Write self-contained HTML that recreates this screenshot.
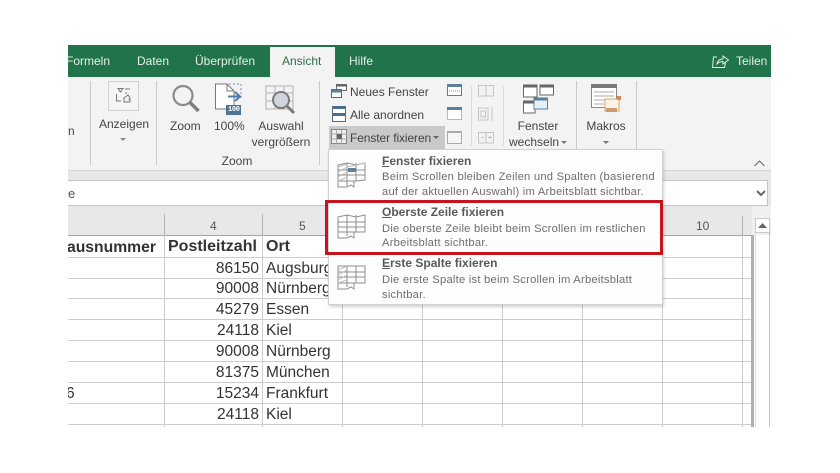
<!DOCTYPE html>
<html lang="de"><head><meta charset="utf-8">
<style>
html,body{margin:0;padding:0;background:#fff}
#p{position:relative;width:840px;height:473px;overflow:hidden;background:#fff;font-family:"Liberation Sans",sans-serif;color:#333}
#p div,#p span.t{position:absolute;white-space:nowrap}
.tab{color:#e6f0ea;font-size:12px;line-height:14px;top:54px}
.r{font-size:12px;line-height:14px;color:#444}
.c{text-align:center}
.sep{background:#c9c9c9;width:1px}
.h{background:#cdcdcd;height:1px;left:68px;width:684px}
.v{background:#cdcdcd;width:1px;top:235px;height:192px}
.cell{font-size:15.5px;line-height:18px;color:#333}
.num{left:164px;width:95px;text-align:right}
.ort{left:266px}
.mt{left:382px;font-size:12px;font-weight:bold;line-height:14px;color:#5a5a5a}
.md{left:382px;font-size:11.2px;line-height:14px;color:#6e6e6e;letter-spacing:.24px}
u{text-decoration:underline}
svg{position:absolute;overflow:visible}
</style></head><body>
<div id="p">
<div style="left:68px;top:45px;width:703px;height:32px;background:#21734a"></div>
<div style="left:270px;top:47px;width:65px;height:30px;background:#f3f3f3"></div>
<div class="tab" style="left:66px">Formeln</div>
<div class="tab" style="left:137px">Daten</div>
<div class="tab" style="left:195px">Überprüfen</div>
<div class="tab" style="left:282px;color:#2f6d4c">Ansicht</div>
<div class="tab" style="left:349px">Hilfe</div>
<div class="tab" style="left:736px">Teilen</div>
<svg style="left:712px;top:54px" width="18" height="15" fill="none" stroke="#dfeee6" stroke-width="1"><path d="M5 3H1.500L.5 13.500H12.500L13.500 9"/><path d="M5 10C5.500 6.500 8 5 11 5V2L16.500 6 11 10V7.500C8.500 7.500 6.500 8.500 5 10Z"/></svg>

<div style="left:68px;top:77px;width:703px;height:93px;background:#f3f3f3"></div>
<div style="left:68px;top:170px;width:703px;height:37px;background:#e8e8e8;border-top:1px solid #d6d6d6;box-sizing:border-box"></div>
<div style="left:68px;top:180px;width:700px;height:26px;background:#fff;border:1px solid #c4c4c4;border-left:0;box-sizing:border-box"></div>
<div style="left:68px;top:186px;font-size:13px;line-height:15px;color:#555">e</div>
<svg style="left:756px;top:190px" width="10" height="7" fill="none" stroke="#666" stroke-width="2"><path d="M1 1L5 5 9 1"/></svg>

<div class="sep" style="left:90px;top:81px;height:84px"></div>
<div class="sep" style="left:156px;top:81px;height:84px"></div>
<div class="sep" style="left:319px;top:81px;height:84px"></div>
<div class="sep" style="left:576px;top:81px;height:68px"></div>
<div class="sep" style="left:636px;top:81px;height:68px"></div>
<div class="sep" style="left:471px;top:86px;height:60px;background:#dcdcdc"></div>
<div class="sep" style="left:503px;top:86px;height:60px;background:#dcdcdc"></div>

<div class="r" style="left:68px;top:124px">n</div>

<div style="left:108px;top:81px;width:31px;height:30px;border:1px solid #d2d2d2;box-sizing:border-box;background:#f5f5f5"></div>
<svg style="left:115px;top:87px" width="18" height="18" fill="none" stroke="#777" stroke-width="1"><path d="M3 1.500H8L5.500 5ZM10 2H15M10 6H12M1.500 7V14H6M13 8L9 11V15H15V11ZM14 12V13"/></svg>
<div class="r" style="left:99px;top:117px">Anzeigen</div>
<svg style="left:120px;top:138px" width="6" height="4"><path d="M0 0H6L3 3Z" fill="#888"/></svg>

<svg style="left:170px;top:84px" width="32" height="32" fill="none"><circle cx="13" cy="11.500" r="9.500" stroke="#8a8a8a" stroke-width="2.200"/><path d="M20 18.500L28.500 27" stroke="#808080" stroke-width="3.600"/></svg>
<div class="r" style="left:170px;top:119px">Zoom</div>

<svg style="left:214px;top:83px" width="30" height="34" fill="none"><path d="M1.500 1H13L20 8V26H1.500Z" fill="#fff" stroke="#777"/><path d="M13 1V8H20" stroke="#777"/><path d="M15 1H27V16" stroke="#6d93b5" stroke-dasharray="2 2"/><path d="M14 13.500H25" stroke="#4a7eaa" stroke-width="2"/><path d="M21 9L26 13.500 21 18" stroke="#4a7eaa" stroke-width="2"/><rect x="12" y="22" width="15" height="10" fill="#4d7495"/></svg>
<div style="left:228px;top:106px;font-size:7px;line-height:8px;color:#fff;font-family:'Liberation Mono',monospace;font-weight:bold;letter-spacing:-.3px">100</div>
<div class="r" style="left:214px;top:119px">100%</div>

<svg style="left:265px;top:85px" width="32" height="32" fill="none"><path d="M1 1H28V24H1ZM1 8H28M10 1V24M19 1V24M1 16H28" stroke="#b2b2b2"/><circle cx="16" cy="15" r="8" fill="#cfd5dc" stroke="#7b7b7b" stroke-width="2"/><path d="M22 21L29 28" stroke="#7b7b7b" stroke-width="3"/></svg>
<div class="r c" style="left:251px;width:60px;top:119px">Auswahl</div>
<div class="r c" style="left:246px;width:70px;top:135px">vergrößern</div>
<div class="r c" style="left:207px;width:60px;top:154px">Zoom</div>

<svg style="left:331px;top:83px" width="16" height="16" fill="none" stroke="#666" stroke-width="1"><rect x="5.500" y="1.500" width="10" height="6" fill="#fff"/><path d="M5.500 2.500H15.500" stroke-width="2"/><rect x=".5" y="6.500" width="10" height="8" fill="#fff"/><path d="M.5 8H10.500" stroke-width="3" stroke="#5b7f9f"/></svg>
<div class="r" style="left:350px;top:85px">Neues Fenster</div>
<svg style="left:332px;top:106px" width="14" height="16"><rect x=".5" y=".5" width="13" height="15" fill="#fff" stroke="#4e6f8c"/><rect x="0" y="0" width="14" height="3" fill="#4e6f8c"/><rect x="0" y="7" width="14" height="3" fill="#4e6f8c"/></svg>
<div class="r" style="left:350px;top:108px">Alle anordnen</div>
<div style="left:329px;top:126px;width:116px;height:23px;background:#c9c9c9"></div>
<svg style="left:331px;top:129px" width="17" height="16" fill="none"><rect x=".5" y=".5" width="15" height="14" fill="#eee" stroke="#888"/><path d="M.5 5H15.500M.5 10H15.500M5.500 .5V14.500M10.500 .5V14.500" stroke="#aaa"/><rect x="6" y="5" width="5" height="5" fill="#666"/></svg>
<div class="r" style="left:350px;top:131px;letter-spacing:-.1px">Fenster fixieren</div>
<svg style="left:433px;top:136px" width="6" height="4"><path d="M0 0H6L3 3Z" fill="#666"/></svg>

<svg style="left:447px;top:84px" width="16" height="64" fill="none"><rect x=".5" y=".5" width="14" height="11" fill="#fff" stroke="#5d7f9d"/><rect x="0" y="0" width="15" height="3" fill="#5d7f9d"/><path d="M2 7H13" stroke="#888" stroke-dasharray="1 1"/><rect x=".5" y="23.500" width="14" height="12" fill="#fff" stroke="#777" stroke-dasharray="1 1"/><rect x="0" y="23" width="15" height="3" fill="#5d7f9d"/><rect x=".5" y="47.500" width="14" height="12" fill="#f6f6f6" stroke="#aaa"/><rect x="0" y="47" width="15" height="2" fill="#aaa"/></svg>
<svg style="left:478px;top:84px" width="18" height="60" fill="none" stroke="#c4c4c4"><path d="M.5 1.500H8V12H.5ZM8 1.500H15.500V12H8"/><path d="M.5 24H10V36H.5ZM3 27H7.500V33H3ZM14 23V37"/><path d="M.5 48.500H8V59H.5ZM8 48.500H15.500V59H8M3 53.500H6M10 53.500H14M12 52V55"/></svg>

<svg style="left:523px;top:84px" width="32" height="30" fill="none"><path d="M.5 1H14V13H.5Z" fill="#fff" stroke="#666"/><path d="M0 2H14" stroke="#666" stroke-width="3"/><path d="M17 1H30.500V11H17Z" fill="#fff" stroke="#666"/><path d="M17 2H31" stroke="#666" stroke-width="3"/><path d="M.5 17H12V29H.5Z" fill="#fff" stroke="#666"/><path d="M0 18H12" stroke="#666" stroke-width="3"/><path d="M11 14H24.500V25H11Z" fill="#e8f0f7" stroke="#5d7f9d"/><path d="M11 15H25" stroke="#5d7f9d" stroke-width="3"/></svg>
<div class="r c" style="left:510px;width:56px;top:119px">Fenster</div>
<div class="r" style="left:509px;top:135px">wechseln</div>
<svg style="left:561px;top:141px" width="6" height="4"><path d="M0 0H6L3 3Z" fill="#777"/></svg>

<svg style="left:591px;top:84px" width="34" height="30" fill="none"><rect x=".5" y=".5" width="25" height="23" fill="#fff" stroke="#888"/><rect x="0" y="0" width="26" height="4" fill="#777"/><path d="M3 8H23M3 12H23M3 16H15M3 20H13" stroke="#aaa"/><path d="M14 15H28V27H14Z" fill="#fdf3e4" stroke="#d8a36b"/><rect x="15" y="24" width="11" height="4" fill="#cf9d6b"/><rect x="26" y="12" width="4" height="4" fill="#d9884a"/></svg>
<div class="r c" style="left:576px;width:60px;top:119px">Makros</div>
<svg style="left:603px;top:141px" width="6" height="4"><path d="M0 0H6L3 3Z" fill="#777"/></svg>
<svg style="left:754px;top:160px" width="11" height="7" fill="none" stroke="#666"><path d="M.5 6L5.500 1 10.500 6"/></svg>

<div style="left:68px;top:235px;width:684px;height:192px;background:#fff"></div>
<div style="left:68px;top:206px;width:684px;height:29px;background:#e8e8e8"></div>
<div style="left:752px;top:206px;width:19px;height:29px;background:#f0f0f0"></div>
<div style="left:68px;top:235px;width:683px;height:1px;background:#a4a4a4"></div>
<div class="sep" style="left:164px;top:214px;height:21px;background:#b5b5b5"></div>
<div class="sep" style="left:262px;top:214px;height:21px;background:#b5b5b5"></div>
<div class="sep" style="left:742px;top:216px;height:19px;background:#b5b5b5"></div>
<div style="left:210px;top:219px;font-size:12px;line-height:14px;color:#555">4</div>
<div style="left:299px;top:219px;font-size:12px;line-height:14px;color:#555">5</div>
<div style="left:696px;top:219px;font-size:12px;line-height:14px;color:#555">10</div>

<div class="h" style="top:257px"></div><div class="h" style="top:278px"></div><div class="h" style="top:298px"></div><div class="h" style="top:319px"></div><div class="h" style="top:340px"></div><div class="h" style="top:361px"></div><div class="h" style="top:382px"></div><div class="h" style="top:403px"></div><div class="h" style="top:424px"></div>
<div class="v" style="left:164px"></div><div class="v" style="left:262px"></div><div class="v" style="left:342px"></div><div class="v" style="left:422px"></div><div class="v" style="left:502px"></div><div class="v" style="left:582px"></div><div class="v" style="left:662px"></div><div class="v" style="left:742px"></div>
<div style="left:751px;top:235px;width:3px;height:192px;background:#b0b0b0"></div>
<div style="left:769px;top:233px;width:1px;height:194px;background:#c4c4c4"></div>
<div style="left:755px;top:233px;width:1px;height:194px;background:#dcdcdc"></div>
<div style="left:755px;top:218px;width:15px;height:15px;background:#fff;border:1px solid #c9c9c9;box-sizing:border-box"></div>
<svg style="left:758px;top:223px" width="9" height="5"><path d="M0 5L4.500 0 9 5Z" fill="#666"/></svg>

<div style="left:68px;top:237px;width:95px;height:19px;overflow:hidden"><span class="t" style="left:-1px;top:1px;font-size:15.700px;line-height:19px;font-weight:bold;color:#333">ausnummer</span></div>
<div class="cell" style="left:168px;top:238px;font-weight:bold;font-size:16px">Postleitzahl</div>
<div class="cell" style="left:266px;top:238px;font-weight:bold;font-size:16px">Ort</div>
<div class="cell num" style="top:260px">86150</div><div class="cell ort" style="top:260px">Augsburg</div>
<div class="cell num" style="top:280px">90008</div><div class="cell ort" style="top:280px">Nürnberg</div>
<div class="cell num" style="top:301px">45279</div><div class="cell ort" style="top:301px">Essen</div>
<div class="cell num" style="top:322px">24118</div><div class="cell ort" style="top:322px">Kiel</div>
<div class="cell num" style="top:343px">90008</div><div class="cell ort" style="top:343px">Nürnberg</div>
<div class="cell num" style="top:364px">81375</div><div class="cell ort" style="top:364px">München</div>
<div class="cell" style="left:68px;top:385px;width:8px;height:18px;overflow:hidden"><span class="t" style="left:-2px;top:0">6</span></div>
<div class="cell num" style="top:385px">15234</div><div class="cell ort" style="top:385px">Frankfurt</div>
<div class="cell num" style="top:406px">24118</div><div class="cell ort" style="top:406px">Kiel</div>

<div style="left:328px;top:149px;width:335px;height:156px;background:#fdfdfd;border:1px solid #d2d2d2;box-sizing:border-box;box-shadow:1px 2px 3px rgba(0,0,0,.18)"></div>
<svg style="left:337px;top:162px" width="30" height="28" fill="none" stroke="#8f8f8f"><path d="M1 3L10 1 19 3 28 1V18L19 19 10 19 1 19ZM1 8H28M1 13H28M1 19V25H10L14 23 17 25V19M10 1V24M19 1V19"/><path d="M1 5L10 2M1 10L10 5M1 15L10 10M1 19L10 15M10 5L28 1" stroke="#bdbdbd"/><rect x="11" y="6" width="8" height="4" fill="#607f9f" stroke="none"/></svg>
<svg style="left:337px;top:214px" width="30" height="28" fill="none" stroke="#8f8f8f"><path d="M1 3L10 1 19 3 28 1V18H1ZM1 8H28M1 13H28M1 18V24H10L14 22 17 24V18M10 1V22M19 1V18"/></svg>
<svg style="left:337px;top:265px" width="30" height="28" fill="none" stroke="#8f8f8f"><path d="M1 1H28V18H1ZM1 7H28M1 12H28M1 18V24H10L14 22 17 24V18M10 1V22M19 1V18"/><path d="M1 5L10 1M1 10L10 5M1 15L10 10M1 18L10 15" stroke="#bdbdbd"/></svg>

<div class="mt" style="top:154px"><u>F</u>enster fixieren</div>
<div class="md" style="top:170px">Beim Scrollen bleiben Zeilen und Spalten (basierend</div>
<div class="md" style="top:185px">auf der aktuellen Auswahl) im Arbeitsblatt sichtbar.</div>
<div class="mt" style="top:205px"><u>O</u>berste Zeile fixieren</div>
<div class="md" style="top:222px">Die oberste Zeile bleibt beim Scrollen im restlichen</div>
<div class="md" style="top:236px">Arbeitsblatt sichtbar.</div>
<div class="mt" style="top:256px"><u>E</u>rste Spalte fixieren</div>
<div class="md" style="top:273px">Die erste Spalte ist beim Scrollen im Arbeitsblatt</div>
<div class="md" style="top:288px">sichtbar.</div>

<div style="left:325px;top:200px;width:338px;height:55px;border:3.500px solid #c4161c;box-sizing:border-box"></div>
</div>
</body></html>
